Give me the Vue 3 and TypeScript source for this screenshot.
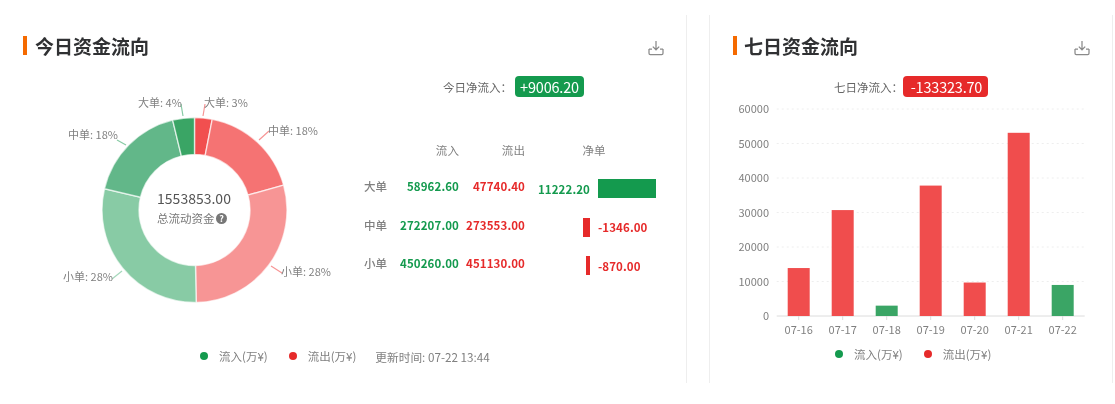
<script setup lang="ts">
const R = 92.5
const r = 55.5
const cx = 194.5
const cy = 210
const segs = [
  { v: 47740.4, c: '#f14f4f' },
  { v: 273553, c: '#f57373' },
  { v: 451130, c: '#f79595' },
  { v: 450260, c: '#88cba5' },
  { v: 272207, c: '#62b789' },
  { v: 58962.6, c: '#3aa565' },
]
const total = segs.reduce((s, x) => s + x.v, 0)
function pt(rad: number, a: number): string {
  return `${(cx + rad * Math.sin(a)).toFixed(2)} ${(cy - rad * Math.cos(a)).toFixed(2)}`
}
let acc = 0
const arcs = segs.map((s) => {
  const a0 = (acc / total) * Math.PI * 2
  acc += s.v
  const a1 = (acc / total) * Math.PI * 2
  const large = a1 - a0 > Math.PI ? 1 : 0
  return {
    c: s.c,
    d: `M${pt(R, a0)} A${R} ${R} 0 ${large} 1 ${pt(R, a1)} L${pt(r, a1)} A${r} ${r} 0 ${large} 0 ${pt(r, a0)} Z`,
  }
})
const labels = [
  { t: '大单: 3%', x: 204, y: 107, l: '203,116 205,104', c: '#f79595' },
  { t: '中单: 18%', x: 268, y: 135, l: '259,140 269,131', c: '#f79595' },
  { t: '小单: 28%', x: 281, y: 276, l: '271,266 282,273', c: '#f79595' },
  { t: '小单: 28%', x: 63, y: 281, l: '122,271 112,279', c: '#a5d8bb' },
  { t: '中单: 18%', x: 68, y: 139, l: '117,140 126,145', c: '#88cba5' },
  { t: '大单: 4%', x: 138, y: 107, l: '181,104 183,116', c: '#88cba5' },
]
const scale = 58 / 11222.2
const rows = [
  { n: '大单', i: '58962.60', o: '47740.40', net: 11222.2, t: '11222.20' },
  { n: '中单', i: '272207.00', o: '273553.00', net: -1346, t: '-1346.00' },
  { n: '小单', i: '450260.00', o: '451130.00', net: -870, t: '-870.00' },
]
const ticks = [60000, 50000, 40000, 30000, 20000, 10000]
const y0 = 216
const perUnit = 34.5 / 10000
const x0 = 66.7
const band = 44
const bars = [
  { d: '07-16', v: 13900, up: false },
  { d: '07-17', v: 30700, up: false },
  { d: '07-18', v: 3000, up: true },
  { d: '07-19', v: 37800, up: false },
  { d: '07-20', v: 9700, up: false },
  { d: '07-21', v: 53100, up: false },
  { d: '07-22', v: 9000, up: true },
]
</script>

<template>
  <div class="page">
    <section class="panel left">
      <header class="head">
        <h2 class="title">今日资金流向</h2>
        <svg class="dl" viewBox="0 0 16 16" width="16" height="16"><path d="M8 1v8.5M4.8 6.6 8 9.8l3.2-3.2M1 9v4.2c0 .8.5 1.3 1.3 1.3h11.4c.8 0 1.3-.5 1.3-1.3V9" /><path d="M1 9h3M12 9h3" /></svg>
      </header>
      <div class="body">
        <svg class="donut" width="350" height="272" viewBox="0 68 350 272">
          <path v-for="(a, i) in arcs" :key="i" :d="a.d" :fill="a.c" stroke="#fff" stroke-opacity=".65" stroke-width="1.4" />
          <polyline v-for="(l, i) in labels" :key="'l' + i" :points="l.l" fill="none" :stroke="l.c" stroke-width="1.2" />
          <text v-for="(l, i) in labels" :key="'t' + i" :x="l.x" :y="l.y" class="lbl">{{ l.t }}</text>
          <text x="194" y="204" text-anchor="middle" class="total">1553853.00</text>
          <text x="157" y="223" class="sub">总流动资金</text>
          <circle cx="221.5" cy="218.5" r="5.5" fill="#777" />
          <text x="221.5" y="222" text-anchor="middle" class="q">?</text>
        </svg>
        <div class="side">
          <div class="net net-left">
            <span>今日净流入：</span>
            <span class="badge up">+9006.20</span>
          </div>
          <div class="table">
            <div class="cell"></div>
            <div class="cell hd num">流入</div>
            <div class="cell hd num">流出</div>
            <div class="cell hd nethd">净单</div>
            <template v-for="row in rows" :key="row.n">
              <div class="cell name">{{ row.n }}</div>
              <div class="cell num green">{{ row.i }}</div>
              <div class="cell num red">{{ row.o }}</div>
              <div class="cell netcell">
                <div class="half lhalf">
                  <span v-if="row.net > 0" class="val green">{{ row.t }}</span>
                  <i v-else class="bar bgred" :style="{ width: Math.abs(row.net) * scale + 'px' }"></i>
                </div>
                <div class="half">
                  <i v-if="row.net > 0" class="bar bggreen" :style="{ width: row.net * scale + 'px' }"></i>
                  <span v-else class="val red">{{ row.t }}</span>
                </div>
              </div>
            </template>
          </div>
        </div>
      </div>
      <div class="legend legend-left">
        <span class="dot bggreen"></span><span class="ltext">流入(万¥)</span>
        <span class="dot bgred second"></span><span class="ltext">流出(万¥)</span>
        <span class="ltext time">更新时间: 07-22 13:44</span>
      </div>
    </section>

    <section class="panel right">
      <header class="head">
        <h2 class="title">七日资金流向</h2>
        <svg class="dl" viewBox="0 0 16 16" width="16" height="16"><path d="M8 1v8.5M4.8 6.6 8 9.8l3.2-3.2M1 9v4.2c0 .8.5 1.3 1.3 1.3h11.4c.8 0 1.3-.5 1.3-1.3V9" /><path d="M1 9h3M12 9h3" /></svg>
      </header>
      <div class="net net-right">
        <span>七日净流入：</span>
        <span class="badge down">-133323.70</span>
      </div>
      <svg class="chart" width="402" height="243" viewBox="0 0 402 243">
        <template v-for="t in ticks" :key="t">
          <line :x1="x0" :x2="x0 + band * 7" :y1="y0 - t * perUnit" :y2="y0 - t * perUnit" stroke="#eee" stroke-dasharray="2 3" />
          <text x="59" :y="y0 - t * perUnit + 4" text-anchor="end" class="axis">{{ t }}</text>
        </template>
        <text x="59" :y="y0 + 4" text-anchor="end" class="axis">0</text>
        <line :x1="x0" :x2="x0 + band * 7" :y1="y0" :y2="y0" stroke="#dcdcdc" />
        <template v-for="(b, i) in bars" :key="b.d">
          <rect :x="x0 + band * i + 11" :y="y0 - b.v * perUnit" width="22" :height="b.v * perUnit" :fill="b.up ? '#3aa565' : '#f04d4d'" />
          <line :x1="x0 + band * i + 22" :x2="x0 + band * i + 22" :y1="y0" :y2="y0 + 4" stroke="#dcdcdc" />
          <text :x="x0 + band * i + 22" :y="y0 + 18" text-anchor="middle" class="axis">{{ b.d }}</text>
        </template>
      </svg>
      <div class="legend legend-right">
        <span class="dot bggreen"></span><span class="ltext">流入(万¥)</span>
        <span class="dot bgred second"></span><span class="ltext">流出(万¥)</span>
      </div>
    </section>
  </div>
</template>

<style scoped>
.page {
  display: flex;
  width: 1115px;
  height: 404px;
  padding-top: 15px;
  box-sizing: border-box;
  background: #fff;
  font-family: "Noto Sans CJK SC", "Noto Sans", sans-serif;
  color: #777;
  overflow: hidden;
  filter: blur(0.3px);
}
.panel {
  height: 368px;
  box-sizing: border-box;
  display: flex;
  flex-direction: column;
}
.left {
  width: 687px;
  border-right: 1px solid #eee;
  margin-right: 22px;
}
.right {
  width: 404px;
  border-left: 1px solid #eee;
  border-right: 1px solid #eee;
}
.head {
  display: flex;
  justify-content: space-between;
  align-items: flex-start;
  padding: 21px 22px 0 23px;
  height: 32px;
  box-sizing: content-box;
}
.title {
  margin: 0;
  font-size: 19px;
  line-height: 19px;
  font-weight: 700;
  color: #303133;
  border-left: 4px solid #f56a00;
  padding-left: 8px;
}
.right .title {
  padding-left: 7px;
}
.dl {
  margin-top: 4px;
  fill: none;
  stroke: #8a8a8a;
  stroke-width: 1.25;
}
.body {
  display: flex;
  height: 272px;
}
.donut {
  display: block;
  flex: none;
}
.lbl {
  font-size: 11px;
  fill: #808080;
}
.total {
  font-size: 14px;
  fill: #555;
}
.sub {
  font-size: 11.5px;
  fill: #777;
}
.q {
  font-size: 9px;
  font-weight: 700;
  fill: #fff;
}
.side {
  padding-top: 8px;
  flex: 1;
}
.net {
  display: flex;
  align-items: center;
  height: 21px;
  font-size: 11.5px;
  color: #666;
}
.net-left {
  padding-left: 93px;
}
.net-right {
  padding-left: 124px;
  margin-top: 8px;
}
.net-left .badge {
  margin-left: 10px;
  width: 69px;
}
.net-right .badge {
  margin-left: 7px;
  width: 85px;
  padding-left: 2px;
  box-sizing: border-box;
}
.net span:first-child {
  width: 62px;
  white-space: nowrap;
}
.badge {
  height: 21px;
  line-height: 21px;
  border-radius: 4px;
  color: #fff;
  font-size: 14.5px;
  text-align: center;
  letter-spacing: -0.2px;
}
.up {
  background: #149a4e;
}
.down {
  background: #e62a2a;
}
.table {
  margin-top: 33px;
  margin-left: 14px;
  display: grid;
  grid-template-columns: 26px 69px 66px 132px;
  grid-template-rows: 37px repeat(3, 38.5px);
  font-size: 11.5px;
  letter-spacing: 0.1px;
}
.cell {
  display: flex;
  align-items: center;
}
.hd {
  color: #808080;
  padding-top: 2px;
}
.name {
  font-weight: 500;
  color: #808080;
}
.num {
  justify-content: flex-end;
}
.green {
  color: #149a4e;
  font-weight: 700;
}
.red {
  color: #e62a2a;
  font-weight: 700;
}
.nethd {
  justify-content: center;
  padding-right: 3px;
  width: 72px;
  margin-left: 33px;
}
.netcell {
  gap: 8px;
}
.half {
  flex: 1;
  display: flex;
  align-items: center;
  height: 19px;
  margin-top: 5px;
}
.lhalf {
  justify-content: flex-end;
  flex: none;
  width: 65px;
}
.val {
  white-space: nowrap;
}
.bar {
  display: block;
  height: 19px;
}
.bggreen {
  background: #149a4e;
}
.bgred {
  background: #e62a2a;
}
.chart {
  display: block;
  flex: none;
  margin-top: 3px;
}
.axis {
  font-size: 11px;
  fill: #808080;
}
.legend {
  display: flex;
  align-items: center;
  height: 20px;
  font-size: 11.5px;
  color: #808080;
}
.legend-left {
  padding-left: 200px;
  margin-top: 6px;
}
.legend-right {
  padding-left: 125px;
  margin-top: 1px;
}
.dot {
  width: 8px;
  height: 8px;
  border-radius: 50%;
  margin-right: 11px;
}
.second {
  margin-left: 21px;
}
.ltext {
  white-space: nowrap;
}
.time {
  margin-left: 19px;
  font-size: 11.7px;
}
</style>
